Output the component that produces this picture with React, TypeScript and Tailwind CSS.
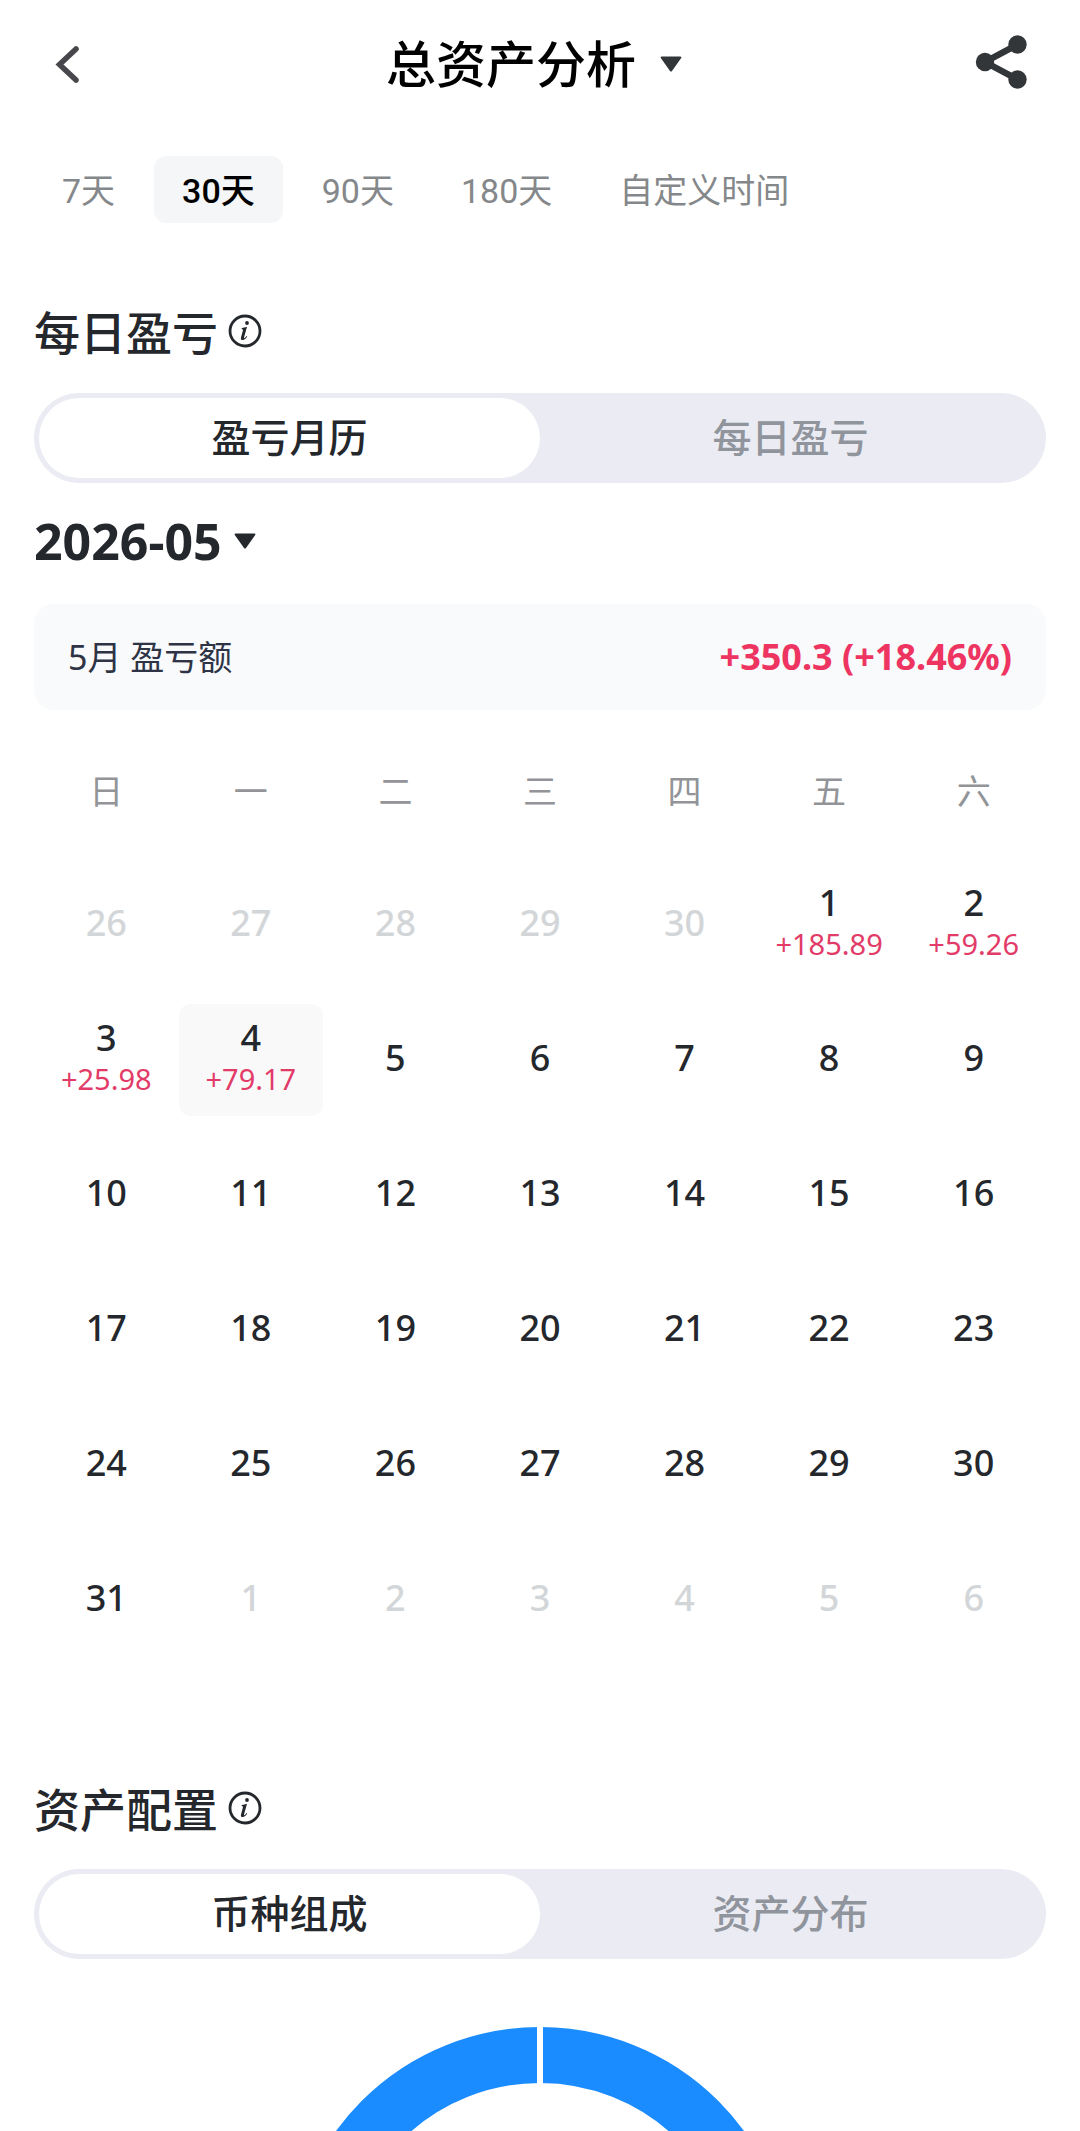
import { useState } from "react";
import clsx from "clsx";

type Day = {
  day: number;
  pnl?: string;
  outside?: boolean;
};

const PERIODS = ["7天", "30天", "90天", "180天", "自定义时间"];
const WEEKDAYS = ["日", "一", "二", "三", "四", "五", "六"];

const PNL: Record<number, string> = {
  1: "+185.89",
  2: "+59.26",
  3: "+25.98",
  4: "+79.17",
};

function buildWeeks(): Day[][] {
  const days: Day[] = [];
  for (let d = 26; d <= 30; d++) days.push({ day: d, outside: true });
  for (let d = 1; d <= 31; d++) days.push({ day: d, pnl: PNL[d] });
  for (let d = 1; d <= 6; d++) days.push({ day: d, outside: true });

  const weeks: Day[][] = [];
  for (let i = 0; i < days.length; i += 7) weeks.push(days.slice(i, i + 7));
  return weeks;
}

const WEEKS = buildWeeks();

function CaretDown({ className }: { className?: string }) {
  return (
    <svg viewBox="0 0 22 16" className={clsx("h-4 w-[22px]", className)} fill="currentColor" aria-hidden="true">
      <path d="M1.6 0.5h18.8c.9 0 1.3.9.8 1.6L12 15c-.5.7-1.5.7-2 0L.8 2.1C.3 1.4.7.5 1.6.5z" />
    </svg>
  );
}

function InfoIcon() {
  return (
    <svg viewBox="0 0 34 34" className="h-[34px] w-[34px]" aria-hidden="true">
      <circle cx="17" cy="17" r="15" fill="none" stroke="currentColor" strokeWidth="2.8" />
      <circle cx="19" cy="9" r="1.9" fill="currentColor" />
      <path
        d="M13.8 13.9c1.8-.1 3.4-.5 5.2-1.2l-3 10.7c-.2.8.1 1 .6.7.7-.4 1.4-1.2 2-2l.6.5c-1.3 2-2.8 3.4-4.5 3.4-1.6 0-2.1-1-1.7-2.6l1.9-6.9c.2-.9 0-1.3-1.3-1.4z"
        fill="currentColor"
      />
    </svg>
  );
}

function SectionTitle({ children }: { children: string }) {
  return (
    <div className="flex items-center gap-2.5 text-[#24272c]">
      <h2 className="pt-0.5 text-[46px] leading-[60px] font-medium">{children}</h2>
      <button type="button" aria-label={`${children}说明`}>
        <InfoIcon />
      </button>
    </div>
  );
}

function Segmented({ options }: { options: string[] }) {
  const [active, setActive] = useState(options[0]);

  return (
    <div className="flex h-[90px] rounded-full bg-[#ebecf3] p-[5px]">
      {options.map((option) => (
        <button
          key={option}
          type="button"
          aria-pressed={active === option}
          onClick={() => setActive(option)}
          className={clsx(
            "flex-1 rounded-full pb-0.5 text-[39px] font-medium",
            active === option ? "bg-white text-[#24272c]" : "text-[#90949c]"
          )}
        >
          {option}
        </button>
      ))}
    </div>
  );
}

export default function App() {
  const [period, setPeriod] = useState("30天");
  const [selected, setSelected] = useState(4);

  return (
    <div className="min-h-screen overflow-hidden bg-white font-['Noto_Sans','Noto_Sans_CJK_SC',sans-serif]">
      <header className="grid h-32 grid-cols-[1fr_auto_1fr] items-center pr-[50px] pl-12">
        <button type="button" aria-label="返回" className="justify-self-start">
          <svg viewBox="0 0 36 44" className="h-11 w-9" fill="none" stroke="#48484c" strokeWidth="5.5" aria-hidden="true">
            <path d="M28 7 11.5 22.5 28 38" strokeLinecap="round" strokeLinejoin="miter" />
          </svg>
        </button>
        <h1>
          <button type="button" className="flex items-center gap-6 pr-2.5 text-[50px] font-medium text-black">
            总资产分析
            <CaretDown className="text-[#333639]" />
          </button>
        </h1>
        <button type="button" aria-label="分享" className="justify-self-end">
          <svg viewBox="0 -1 56 56" className="h-14 w-14 overflow-visible" fill="#333639" aria-hidden="true">
            <path d="M43.5 7.5 11 25l32.5 17.5" fill="none" stroke="#333639" strokeWidth="6.5" />
            <circle cx="43.5" cy="7.5" r="9.2" />
            <circle cx="11" cy="25" r="9.2" />
            <circle cx="43.5" cy="42.5" r="9.2" />
          </svg>
        </button>
      </header>

      <main className="px-[34px]">
        <nav className="mt-7 flex gap-[11px] font-['Roboto','Noto_Sans_CJK_SC',sans-serif]">
          {PERIODS.map((item) => (
            <button
              key={item}
              type="button"
              aria-pressed={period === item}
              onClick={() => setPeriod(item)}
              className={clsx(
                "h-[67px] rounded-xl px-7 pt-1 text-[34px]",
                period === item ? "bg-[#f4f6f8] font-medium text-black" : "text-[#85888a]"
              )}
            >
              {item}
            </button>
          ))}
        </nav>

        <section className="mt-[77px]">
          <SectionTitle>每日盈亏</SectionTitle>
          <div className="mt-[31px]">
            <Segmented options={["盈亏月历", "每日盈亏"]} />
          </div>

          <button type="button" className="mt-7 flex h-[60px] items-center gap-3 text-[50px] font-bold text-[#24272c]">
            2026-05
            <CaretDown />
          </button>

          <div className="mt-[33px] flex h-[106px] items-center justify-between rounded-[20px] bg-[#f8fafc] px-[34px]">
            <span className="text-[34px] text-[#2e3445]">5月 盈亏额</span>
            <span className="text-[36px] font-bold text-[#ee3460]">+350.3 (+18.46%)</span>
          </div>

          <table className="mt-[15px] w-full table-fixed border-collapse">
            <thead>
              <tr>
                {WEEKDAYS.map((name) => (
                  <th key={name} scope="col" className="h-[132px] p-0 text-[34px] font-normal text-[#929497]">
                    {name}
                  </th>
                ))}
              </tr>
            </thead>
            <tbody>
              {WEEKS.map((week, i) => (
                <tr key={i}>
                  {week.map(({ day, pnl, outside }) => (
                    <td key={day} className="h-[135px] p-0">
                      <button
                        type="button"
                        disabled={outside}
                        onClick={() => setSelected(day)}
                        className={clsx(
                          "flex h-28 w-full flex-col items-center justify-center rounded-xl pb-1",
                          !outside && selected === day && "bg-[#f9f9fa]"
                        )}
                      >
                        <span
                          className={clsx(
                            "text-[36px] leading-[42px] font-medium",
                            outside ? "text-[#d3d6d8]" : "text-[#24272c]"
                          )}
                        >
                          {day}
                        </span>
                        {pnl && <span className="text-[29px] leading-10 text-[#e23b68]">{pnl}</span>}
                      </button>
                    </td>
                  ))}
                </tr>
              ))}
            </tbody>
          </table>
        </section>

        <section className="mt-[110px]">
          <SectionTitle>资产配置</SectionTitle>
          <div className="mt-[30px]">
            <Segmented options={["币种组成", "资产分布"]} />
          </div>

          {/* top of the allocation ring */}
          <svg viewBox="0 0 504 104" className="mx-auto mt-[68px] block h-[104px] w-[504px]" aria-hidden="true">
            <circle cx="252" cy="252" r="224" fill="none" stroke="#1a8cff" strokeWidth="56" />
            <rect x="249" y="0" width="6" height="60" fill="#fff" />
          </svg>
        </section>
      </main>
    </div>
  );
}
